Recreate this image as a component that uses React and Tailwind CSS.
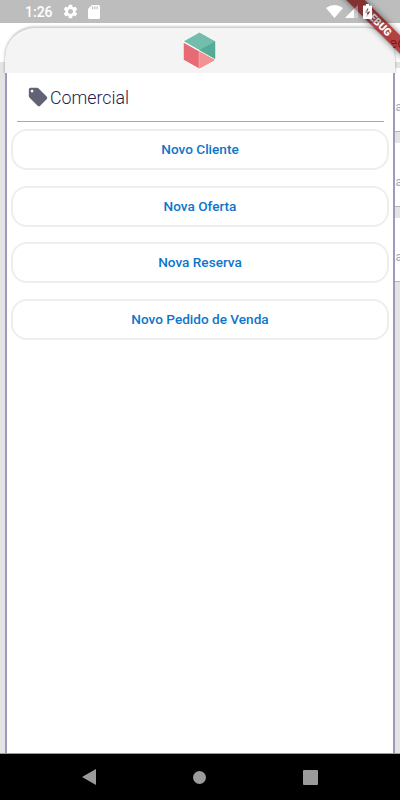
import { MdLocalOffer, MdSettings } from 'react-icons/md'

const actions = ['Novo Cliente', 'Nova Oferta', 'Nova Reserva', 'Novo Pedido de Venda']

// translucent, so the app and the debug ribbon show through
function StatusBar() {
  return (
    <div className="absolute inset-x-0 top-0 z-30 flex h-[23px] items-center bg-black/[.26] pl-[25px] text-white">
      <span className="w-[37px] pt-px text-[14px] font-medium leading-none">1:26</span>
      <MdSettings className="size-[17px]" />
      <svg className="ml-[9px] h-[14px] w-[12px]" viewBox="0 0 12 14" fill="currentColor">
        <path fillRule="evenodd" d="M4 0h6.5A1.5 1.5 0 0 1 12 1.5v11a1.5 1.5 0 0 1-1.5 1.5h-9A1.5 1.5 0 0 1 0 12.500V4ZM4 1.500v2.800h1.200V1.500ZM6.300 1.500v2.800h1.200V1.500ZM8.600 1.500v2.800h1.200V1.500Z" />
      </svg>
      <svg className="ml-auto mr-[2px] h-[13px] w-[17px]" viewBox="0 0 17 13" fill="currentColor">
        <path d="M0 3Q8.500-3 17 3L8.500 13Z" />
      </svg>
      <svg className="mr-[5px] size-[13px]" viewBox="0 0 13 13" fill="currentColor">
        <path fillOpacity=".35" d="M13 0v13H0Z" />
        <path d="M9 4v9H0Z" />
      </svg>
      <svg className="mr-[28px] h-[15px] w-[9px]" viewBox="0 0 9 15" fill="currentColor">
        <path fillRule="evenodd" d="M3 0h3v1.500h2.200a.8 .8 0 0 1 .8 .8v11.900a.8 .8 0 0 1-.8 .8H.8a.8 .8 0 0 1-.8-.8V2.300a.8 .8 0 0 1 .8-.8H3ZM5.200 3.500 1.800 9h2v4L7.200 7.500h-2Z" />
      </svg>
    </div>
  )
}

function BackgroundCard() {
  return (
    <div className="ml-[8px] flex h-[64px] items-center justify-end overflow-hidden border-b border-[#b5b5b5] bg-white text-[12px] text-[#a3a4c0]">
      <span className="-mr-[2px] pt-[14px]">ta</span>
    </div>
  )
}

function Logo() {
  return (
    <svg className="mr-px h-[37px] w-[33px]" viewBox="0 0 33 37">
      <path d="M16.500 0 33 9v19L16.500 37 0 28V9Z" fill="#fff" />
      <path d="M16.500 .6 32.200 9.300v17.700L.8 9.300Z" fill="#72bdab" />
      <path d="M32.200 9.300v17.700L16.500 18.200Z" fill="#55ac96" />
      <path d="M.7 10.700 31.800 28 16.300 36.400 .7 27.700Z" fill="#e66b74" />
      <path d="M16.500 19.600 31.800 28 16.500 36.400Z" fill="#f29393" />
      <path d="M16.200 19.500v17" stroke="#f9d5d7" strokeWidth=".6" />
    </svg>
  )
}

function Sheet() {
  return (
    <div className="absolute inset-x-[5px] bottom-[47px] top-[27px] flex flex-col">
      <div className="flex h-[46px] shrink-0 items-center justify-center rounded-t-[30px] border-t border-[#d2d2d2] bg-[#f4f4f4] shadow-[0_0_3px_rgba(0,0,0,0.35)]">
        <Logo />
      </div>
      <div className="relative flex-1 border-x-2 border-[#9a9bbd] bg-white px-[4px]">
        <div className="ml-[6px] mr-[5px] flex h-[49px] items-center border-b border-[#a6a6bf] pl-[10px]">
          <MdLocalOffer className="size-[22px] text-[#626275]" />
          <h1 className="ml-px pt-[2px] text-[17.800px] font-light text-[#1c1c50]">Comercial</h1>
        </div>
        <div className="mt-[7px] flex flex-col gap-[15.500px]">
          {actions.map((label) => (
            <button key={label} className="h-[41px] rounded-[16px] border-2 border-[#eeeeee] text-[13.600px] font-medium text-[#0d76cb]">
              {label}
            </button>
          ))}
        </div>
      </div>
    </div>
  )
}

function NavBar() {
  return (
    <div className="relative flex h-[47px] shrink-0 items-center justify-between border-t border-[#999] bg-black px-[82px] text-[#9b9b9b]">
      <svg className="h-4 w-[14px]" viewBox="0 0 14 16" fill="currentColor"><path d="M14 0v16L0 8Z" /></svg>
      <div className="size-[13px] rounded-full bg-current" />
      <div className="size-[15px] rounded-[1px] bg-current" />
    </div>
  )
}

export default function App() {
  return (
    <div className="relative flex h-[800px] w-[400px] flex-col overflow-hidden bg-[#e4e4e4] font-['Roboto',sans-serif]">
      <StatusBar />
      <div className="flex h-[62px] shrink-0 items-center justify-end bg-white pt-[25px] text-[15px] text-[#1c1c50]">
        <span className="-mr-[5px]">ec</span>
      </div>
      <div className="flex flex-1 flex-col gap-[11px] pt-[6px]">
        <BackgroundCard />
        <BackgroundCard />
        <BackgroundCard />
      </div>
      <Sheet />
      <NavBar />
      <div className="absolute right-[-37.500px] top-[16px] z-20 flex h-[13px] w-[120px] rotate-45 items-center justify-center bg-[#a01414]/80 text-[10.500px] font-black text-white shadow-[0_0_6px_rgba(0,0,0,0.5)]">
        DEBUG
      </div>
    </div>
  )
}
